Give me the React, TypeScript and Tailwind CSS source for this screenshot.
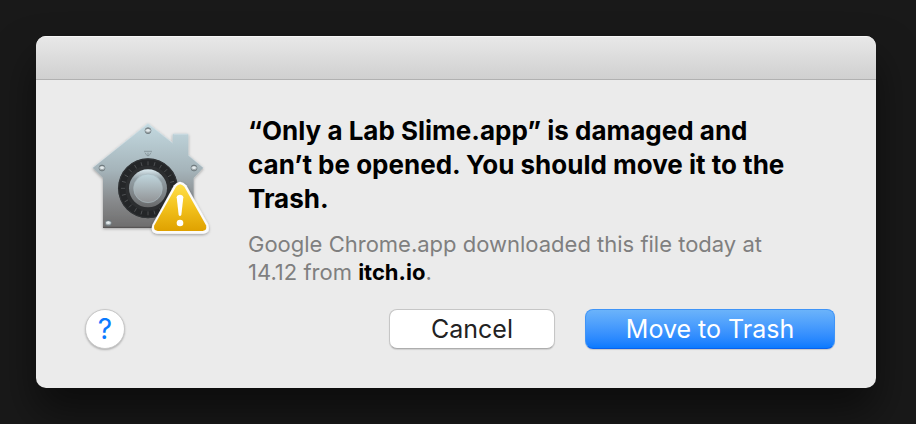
import React from "react";

const dialTicks = Array.from({ length: 24 }, (_, i) => i * 15);

const rivets = [
  { x: 204, y: 62 },
  { x: 66, y: 174 },
  { x: 342, y: 174 },
  { x: 85, y: 339 },
];

const GatekeeperIcon = () => {
  return (
    <svg
      className="w-[126px] h-[122px] shrink-0"
      viewBox="24 24 378 366"
      role="img"
      aria-label="Security warning"
    >
      <defs>
        <linearGradient id="house" x1="0" y1="0" x2="0" y2="1">
          <stop offset="0" stopColor="#c3d9e0" />
          <stop offset="0.45" stopColor="#a5b4ba" />
          <stop offset="0.75" stopColor="#87898b" />
          <stop offset="1" stopColor="#6e6d6d" />
        </linearGradient>
        <linearGradient id="ring" x1="0" y1="0" x2="0" y2="1">
          <stop offset="0" stopColor="#dcebf1" />
          <stop offset="0.25" stopColor="#93a0a6" />
          <stop offset="0.7" stopColor="#7b8083" />
          <stop offset="1" stopColor="#68696a" />
        </linearGradient>
        <linearGradient id="knob" x1="0" y1="0" x2="0" y2="1">
          <stop offset="0" stopColor="#c0d6de" />
          <stop offset="1" stopColor="#929496" />
        </linearGradient>
        <linearGradient id="rivet" x1="0" y1="0" x2="0" y2="1">
          <stop offset="0" stopColor="#5d6669" />
          <stop offset="0.45" stopColor="#dce4e7" />
          <stop offset="1" stopColor="#737b7e" />
        </linearGradient>
        <linearGradient id="warn" x1="0" y1="0" x2="0" y2="1">
          <stop offset="0" stopColor="#ffe04a" />
          <stop offset="0.5" stopColor="#f2c11c" />
          <stop offset="1" stopColor="#dfa100" />
        </linearGradient>
        <filter id="shade" x="-10%" y="-10%" width="120%" height="125%">
          <feDropShadow dx="0" dy="3" stdDeviation="4" floodOpacity="0.35" />
        </filter>
      </defs>

      <path
        d="M204 40 L278 98 V74 Q278 71 281 71 H322 Q325 71 325 74 V135 L370 173 L341 204 V353 H69 V204 L38 173 Z"
        fill="url(#house)"
        filter="url(#shade)"
      />
      <path d="M38 173 L204 41 L278 99 M281 73 H323 M325 136 L369 172" fill="none" stroke="#dceaf0" strokeWidth="2" opacity="0.7" />
      <path d="M69 352 H341" stroke="#4f4e4e" strokeWidth="3" />

      {rivets.map((r) => (
        <g key={`${r.x}-${r.y}`}>
          <circle cx={r.x} cy={r.y} r="9" fill="url(#rivet)" stroke="#69757a" strokeWidth="2" />
          <circle cx={r.x} cy={r.y - 1} r="4" fill="#e4ebed" />
        </g>
      ))}

      <path d="M192 124 H216 M195 128 L201 137 H207 L213 128 M204 128 V137" fill="none" stroke="#78868b" strokeWidth="2" />

      <circle cx="204" cy="235" r="90" fill="#242628" />
      <circle cx="204" cy="235" r="88" fill="none" stroke="#3a3d3f" strokeWidth="2" />
      <circle cx="204" cy="235" r="68" fill="#2c2e30" />
      {dialTicks.map((deg) => (
        <path
          key={deg}
          d="M204 154 V166"
          stroke="#5e6163"
          strokeWidth="2"
          transform={`rotate(${deg} 204 235)`}
        />
      ))}
      <circle cx="204" cy="235" r="57" fill="url(#ring)" />
      <circle cx="204" cy="235" r="43" fill="url(#knob)" stroke="#a9b9bf" strokeWidth="2" />

      <path
        d="M282 226 Q300 205 319 226 L385 344 Q393 368 370 371 H231 Q209 368 217 344 Z"
        fill="#fbfbfb"
        filter="url(#shade)"
      />
      <path
        d="M288 230 Q300 215 313 230 L378 346 Q383 361 368 363 H233 Q218 361 223 346 Z"
        fill="url(#warn)"
      />
      <path d="M290 262 Q291 254 300 254 Q309 254 310 262 L304 315 Q300 321 296 315 Z" fill="#fff" />
      <circle cx="300" cy="339" r="10" fill="#fff" />
    </svg>
  );
};

const App = () => {
  return (
    <div className="flex min-h-screen bg-[#191919] py-9 pl-9 pr-10 font-['Inter','Liberation_Sans',sans-serif]">
      <div
        role="alertdialog"
        aria-labelledby="title"
        aria-describedby="message"
        className="flex flex-1 flex-col overflow-hidden rounded-[10px] bg-[#ebebeb] shadow-[0_24px_40px_rgba(0,0,0,0.5)]"
      >
        <div className="h-11 border-t border-b border-t-[#f6f6f6] border-b-[#b1b1b1] bg-linear-to-b from-[#e8e8e8] to-[#d0d0d0]"></div>
        <div className="flex flex-row pl-[52px] pr-16 pt-[34px]">
          <div className="pt-1">
            <GatekeeperIcon />
          </div>
          <div className="flex-1 pl-[34px]">
            <h1 id="title" className="text-[26px] leading-[34px] font-bold text-black">
              “Only a Lab Slime.app” is damaged and can’t be opened. You should move it to the Trash.
            </h1>
            <p id="message" className="pt-3.5 text-[22px] leading-7 text-[#7f7f7f]">
              Google Chrome.app downloaded this file today at 14.12 from{" "}
              <b className="font-bold text-black">itch.io</b>.
            </p>
          </div>
        </div>
        <div className="flex flex-row items-center pl-[49px] pr-[41px] pt-[23px] pb-9">
          <button
            aria-label="Help"
            className="size-10 rounded-full border border-[#c8c8c8] bg-white text-[28px] leading-9 text-[#0a7aff] shadow-[0_1px_2px_rgba(0,0,0,0.25)]"
          >
            ?
          </button>
          <button className="ml-auto h-10 w-[166px] rounded-lg border border-[#c6c6c6] border-b-[#adadad] bg-white text-[25px] leading-9 text-[#222222] shadow-[0_1px_1px_rgba(0,0,0,0.12)]">
            Cancel
          </button>
          <button className="ml-[30px] h-10 w-[250px] rounded-lg border border-[#3f94f7] border-b-[#0a62ee] bg-linear-to-b from-[#6bb3fa] to-[#087aff] text-[25px] leading-9 text-white shadow-[0_1px_1px_rgba(0,0,0,0.15)]">
            Move to Trash
          </button>
        </div>
      </div>
    </div>
  );
};

export default App;
